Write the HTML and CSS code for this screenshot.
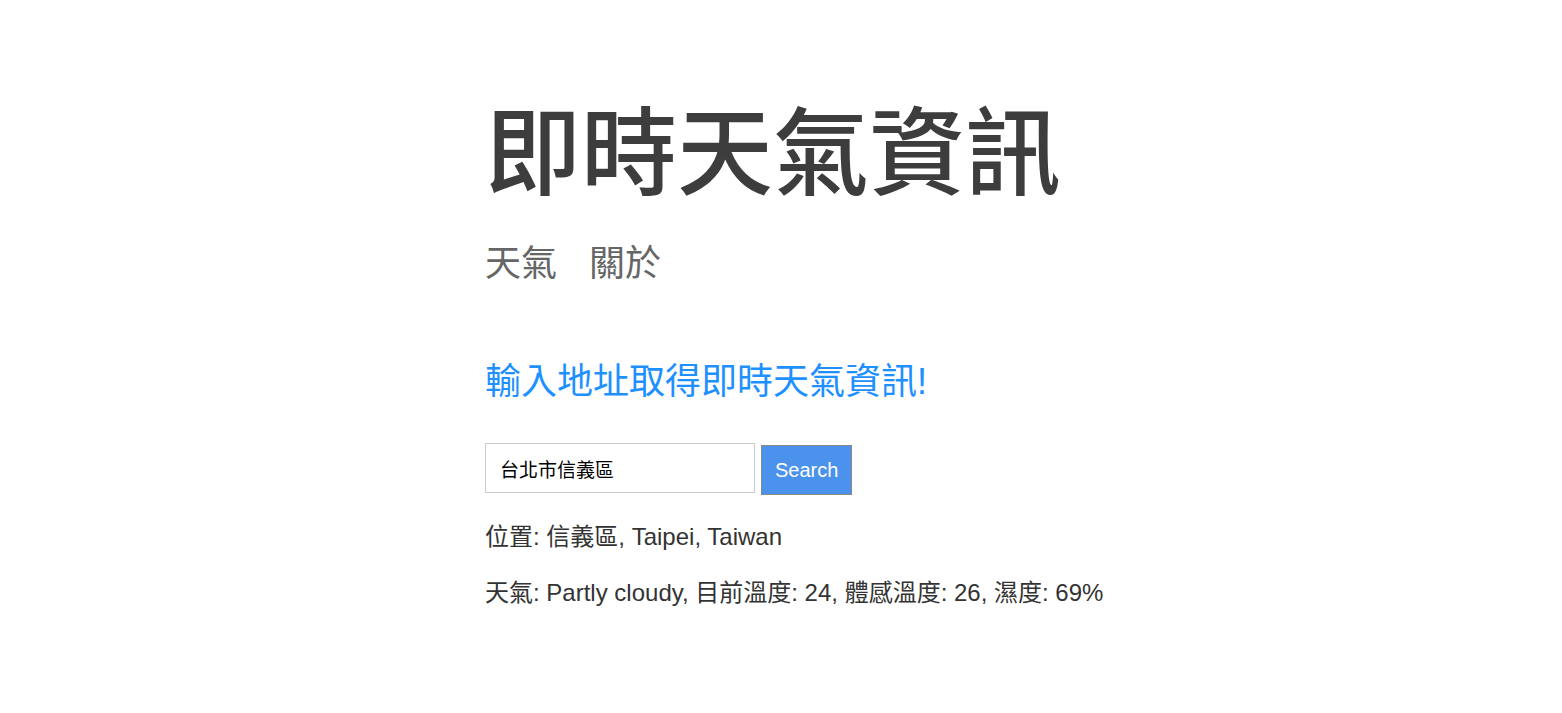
FILE: index.html
```html
<!DOCTYPE html>
<html lang="zh-Hant">
<head>
<meta charset="utf-8">
<title>即時天氣資訊</title>
<link rel="stylesheet" href="styles.css">
</head>
<body>
<div class="container">
  <header class="header">
    <h1 class="title">即時天氣資訊</h1>
    <nav class="nav">
      <a class="nav-link" href="#">天氣</a>
      <a class="nav-link" href="#">關於</a>
    </nav>
  </header>
  <main class="main">
    <h2 class="lead">輸入地址取得即時天氣資訊!</h2>
    <form class="search-form">
      <input class="search-input" type="text" value="台北市信義區">
      <button class="search-btn" type="button">Search</button>
    </form>
    <p class="info info-location">位置: 信義區, Taipei, Taiwan</p>
    <p class="info info-weather">天氣: Partly cloudy, 目前溫度: 24, 體感溫度: 26, 濕度: 69%</p>
  </main>
</div>
</body>
</html>
```

FILE: styles.css
```css
html, body {
  margin: 0;
  padding: 0;
  background: #ffffff;
}

body {
  font-family: "Liberation Sans", "Noto Sans CJK TC", sans-serif;
  color: #333333;
}

.container {
  max-width: 592px;
  margin: 0 auto;
  padding-top: 106px;
}

.title {
  margin: 0;
  font-size: 96px;
  line-height: 1;
  font-weight: 500;
  color: #3d3d3d;
  white-space: nowrap;
}

.nav {
  display: flex;
  gap: 32px;
  margin-top: 44px;
}

.nav-link {
  font-size: 36px;
  line-height: 1;
  color: #666666;
  text-decoration: none;
}

.lead {
  margin: 82px 0 0;
  font-size: 36px;
  line-height: 1;
  font-weight: 400;
  color: #1e90ff;
}

.search-form {
  display: flex;
  align-items: flex-start;
  gap: 6px;
  margin-top: 43px;
}

.search-input {
  box-sizing: border-box;
  width: 270px;
  height: 50px;
  margin: 0;
  padding: 0 14px;
  border: 1px solid #cccccc;
  font-family: "Liberation Sans", "Noto Sans CJK TC", sans-serif;
  font-size: 19px;
  color: #000000;
  outline: none;
}

.search-btn {
  box-sizing: border-box;
  height: 50px;
  margin: 2px 0 0;
  padding: 0 13px;
  border: 1px solid #888888;
  background: #4a92ec;
  color: #ffffff;
  font-family: "Liberation Sans", "Noto Sans CJK TC", sans-serif;
  font-size: 20px;
  cursor: pointer;
}

.info {
  margin: 25px 0 0;
  font-size: 24px;
  line-height: 33px;
  color: #333333;
  white-space: nowrap;
}

.info-weather {
  margin-top: 23px;
}
```
